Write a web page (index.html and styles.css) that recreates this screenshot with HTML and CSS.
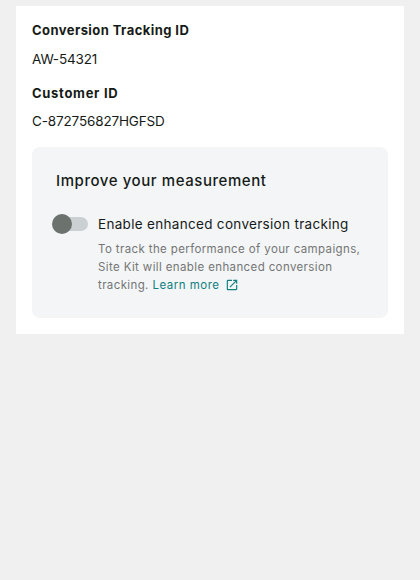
FILE: index.html
```html
<!DOCTYPE html>
<html lang="en">
<head>
<meta charset="utf-8">
<title>Tracking settings</title>
<link rel="stylesheet" href="styles.css">
</head>
<body>
<main class="card">
  <h5 class="label">Conversion Tracking ID</h5>
  <p class="value">AW-54321</p>
  <h5 class="label label-customer">Customer ID</h5>
  <p class="value value-last">C-872756827HGFSD</p>
  <section class="panel">
    <h4 class="title">Improve your measurement</h4>
    <div class="setting">
      <div class="switch" role="switch" aria-checked="false"><span class="track"></span><span class="thumb"></span></div>
      <div class="content">
        <div class="name">Enable enhanced conversion tracking</div>
        <p class="help">To track the performance of your campaigns,<br>Site Kit will enable enhanced conversion<br>tracking. <a class="link">Learn more<svg class="ext" viewBox="0 0 24 24"><path fill="currentColor" d="M19 19H5V5h7V3H5a2 2 0 0 0-2 2v14a2 2 0 0 0 2 2h14c1.100 0 2-.9 2-2v-7h-2v7zM14 3v2h3.590l-9.830 9.830 1.410 1.410L19 6.410V10h2V3h-7z"/></svg></a></p>
      </div>
    </div>
  </section>
</main>
</body>
</html>
```
FILE: styles.css
```css
* { box-sizing: border-box; }
body { margin: 0; padding: 6px 16px; background: #f0f0f0; font-family: Inter, sans-serif; color: #161b18; }
h4, h5, p { margin: 0; font-weight: 400; }
.card { height: 328px; padding: 14px 16px 16px; background: #fff; }
.label { font-size: 13px; line-height: 20px; font-weight: 700; letter-spacing: .43px; }
.label-customer { letter-spacing: .7px; }
.value { margin: 9px 0 14px; font-size: 13.5px; line-height: 20px; letter-spacing: -.15px; }
.value-last { margin: 8px 0 16px; }
.panel { height: 171px; padding: 22px 24px; border-radius: 8px; background: #f3f5f7; }
.title { font-size: 15px; line-height: 24px; font-weight: 500; letter-spacing: .57px; }
.setting { display: flex; gap: 10px; margin: 19px 0 0 -4px; }
.switch { position: relative; width: 36px; height: 24px; padding: 5px 0 5px 4px; }
.track { display: block; height: 14px; border-radius: 7px; background: #cbd0d3; }
.thumb { position: absolute; top: 2px; left: 0; width: 20px; height: 20px; border-radius: 50%; background: #6c726e; }
.name { font-size: 13.5px; line-height: 24px; letter-spacing: .31px; white-space: nowrap; }
.help { margin-top: 4px; font-size: 11.5px; line-height: 18px; letter-spacing: .38px; color: #757575; white-space: nowrap; }
.link { color: #108080; letter-spacing: .5px; }
.ext { width: 14px; height: 14px; margin-left: 5px; vertical-align: -3px; }
```
